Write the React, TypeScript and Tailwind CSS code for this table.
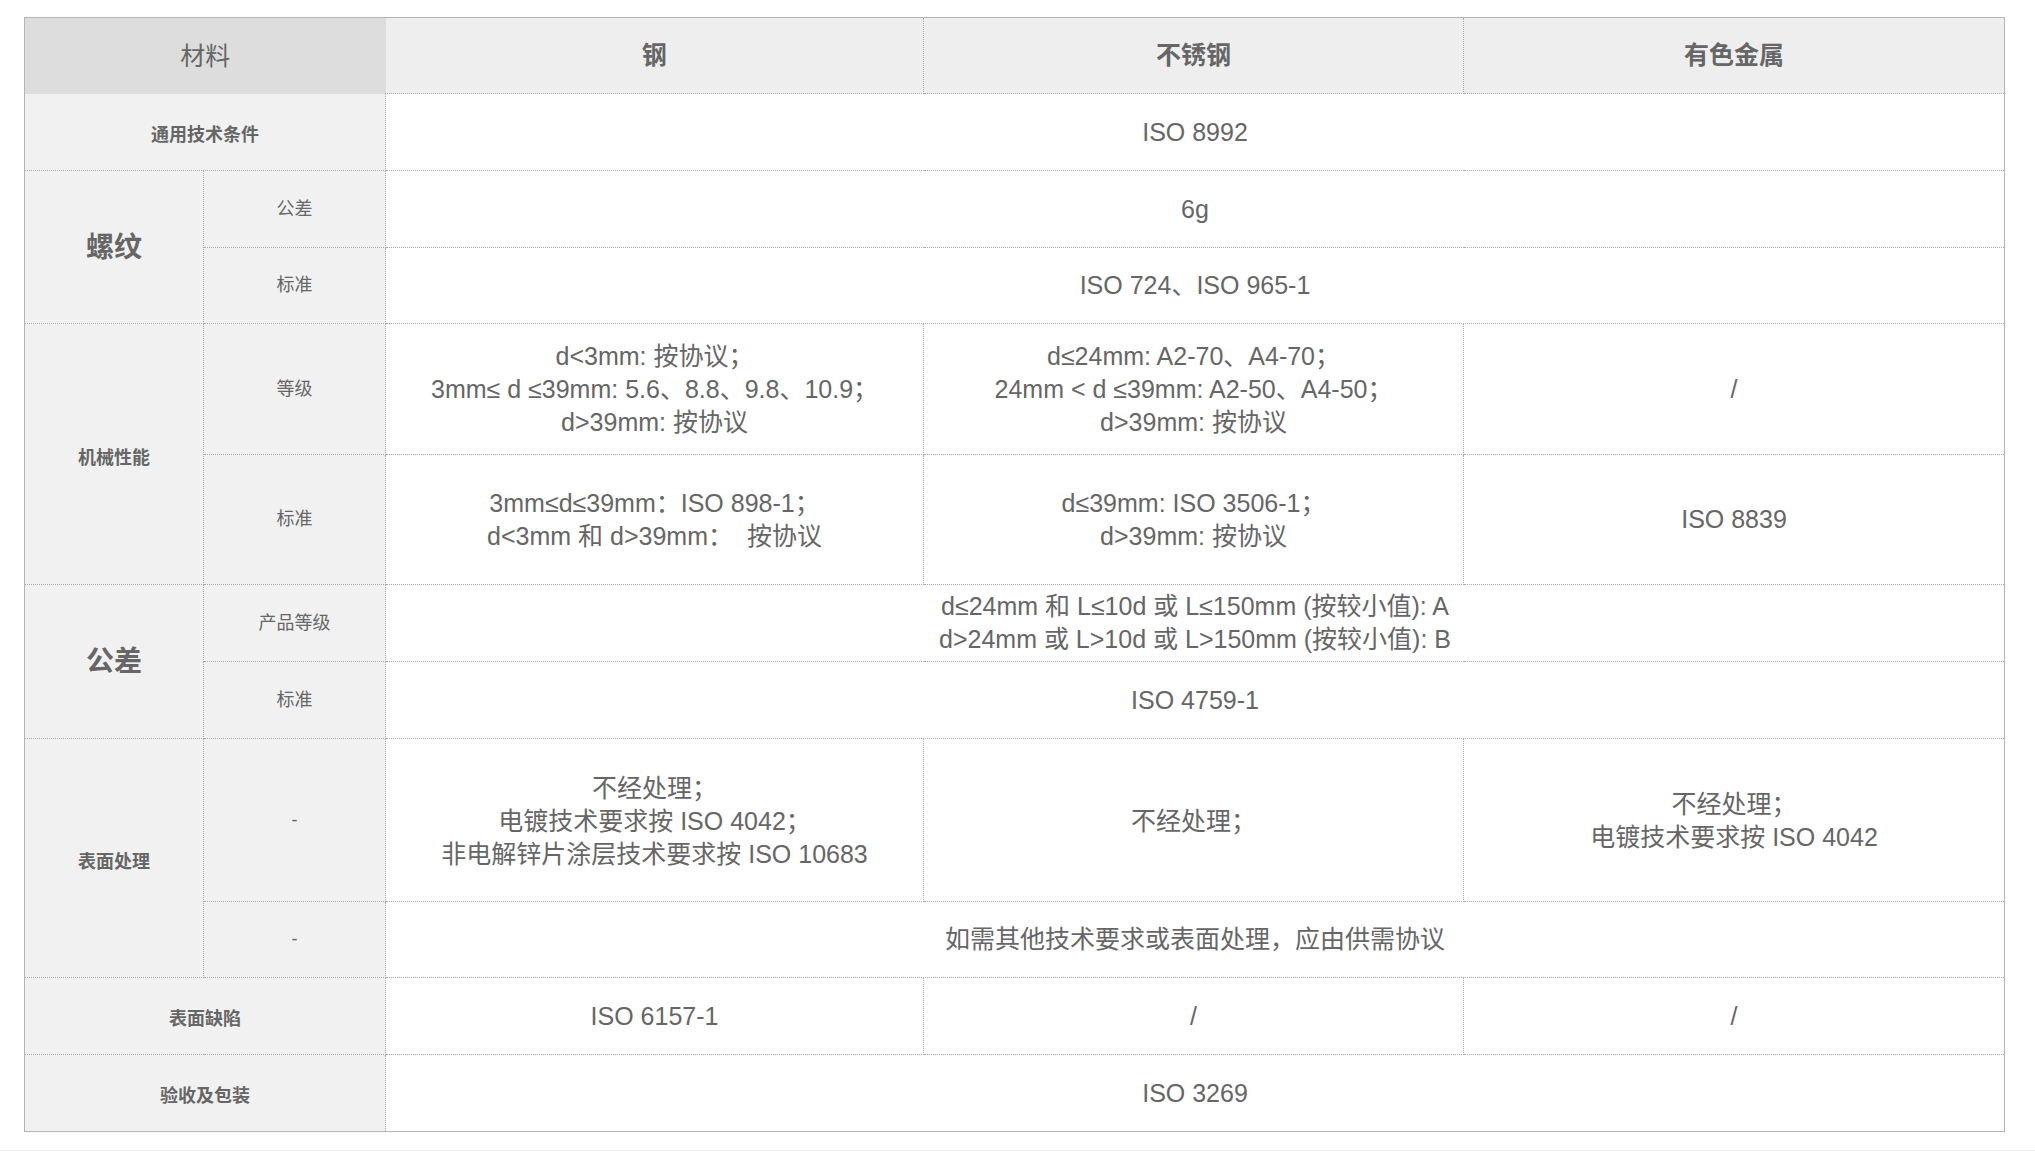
import React from 'react';

const font = 'font-["Liberation_Sans","Noto_Sans_CJK_SC",sans-serif]';

// shared cell styles
const cell = 'border-r border-b border-dotted border-[#aaa] p-0 text-center align-middle';
const label = `${cell} bg-[#f1f1f1]`;
const data = `${cell} bg-white text-[25px] leading-[33px]`;

const Lines: React.FC<{ lines: string[] }> = ({ lines }) => (
  <>
    {lines.map((l, i) => (
      <div key={i} className="whitespace-pre">{l}</div>
    ))}
  </>
);

const App: React.FC = () => {
  return (
    <div className={`min-h-screen bg-white text-[#666] ${font}`}>
      <div className="pt-[17px] px-[24px]">
        <table className="w-[1980px] table-fixed border-collapse border border-solid border-[#b4b4b4]">
          <colgroup>
            <col className="w-[179px]" />
            <col className="w-[182px]" />
            <col className="w-[538px]" />
            <col className="w-[540px]" />
            <col className="w-[541px]" />
          </colgroup>
          <tbody>
            {/* ── Header ── */}
            <tr className="h-[76px]">
              <td colSpan={2} className="p-0 pt-[2px] text-center align-middle bg-[#dddddd] text-[25px]">
                材料
              </td>
              <td className={`${cell} bg-[#eeeeee] text-[25px] font-bold`}>钢</td>
              <td className={`${cell} bg-[#eeeeee] text-[25px] font-bold`}>不锈钢</td>
              <td className={`${cell} bg-[#eeeeee] text-[25px] font-bold`}>有色金属</td>
            </tr>

            <tr className="h-[77px]">
              <td colSpan={2} className={`${label} text-[18px] font-bold pt-[7px]`}>通用技术条件</td>
              <td colSpan={3} className={data}>ISO 8992</td>
            </tr>

            {/* ── 螺纹 ── */}
            <tr className="h-[77px]">
              <td rowSpan={2} className={`${label} text-[28px] font-bold pt-[2px]`}>螺纹</td>
              <td className={`${label} text-[18px]`}>公差</td>
              <td colSpan={3} className={data}>6g</td>
            </tr>
            <tr className="h-[76px]">
              <td className={`${label} text-[18px]`}>标准</td>
              <td colSpan={3} className={data}>ISO 724、ISO 965-1</td>
            </tr>

            {/* ── 机械性能 ── */}
            <tr className="h-[131px]">
              <td rowSpan={2} className={`${label} text-[18px] font-bold pt-[8px]`}>机械性能</td>
              <td className={`${label} text-[18px]`}>等级</td>
              <td className={data}>
                <Lines lines={['d<3mm: 按协议；', '3mm≤ d ≤39mm: 5.6、8.8、9.8、10.9；', 'd>39mm: 按协议']} />
              </td>
              <td className={data}>
                <Lines lines={['d≤24mm: A2-70、A4-70；', '24mm < d ≤39mm: A2-50、A4-50；', 'd>39mm: 按协议']} />
              </td>
              <td className={data}>/</td>
            </tr>
            <tr className="h-[130px]">
              <td className={`${label} text-[18px]`}>标准</td>
              <td className={data}>
                <Lines lines={['3mm≤d≤39mm：ISO 898-1；', 'd<3mm 和 d>39mm：  按协议']} />
              </td>
              <td className={data}>
                <Lines lines={['d≤39mm: ISO 3506-1；', 'd>39mm: 按协议']} />
              </td>
              <td className={data}>ISO 8839</td>
            </tr>

            {/* ── 公差 ── */}
            <tr className="h-[77px]">
              <td rowSpan={2} className={`${label} text-[28px] font-bold`}>公差</td>
              <td className={`${label} text-[18px]`}>产品等级</td>
              <td colSpan={3} className={data}>
                <Lines
                  lines={[
                    'd≤24mm 和 L≤10d 或 L≤150mm (按较小值): A',
                    'd>24mm 或 L>10d 或 L>150mm (按较小值): B',
                  ]}
                />
              </td>
            </tr>
            <tr className="h-[77px]">
              <td className={`${label} text-[18px]`}>标准</td>
              <td colSpan={3} className={data}>ISO 4759-1</td>
            </tr>

            {/* ── 表面处理 ── */}
            <tr className="h-[163px]">
              <td rowSpan={2} className={`${label} text-[18px] font-bold pt-[8px]`}>表面处理</td>
              <td className={`${label} text-[18px]`}>-</td>
              <td className={`${data} pt-[2px]`}>
                <Lines lines={['不经处理；', '电镀技术要求按 ISO 4042；', '非电解锌片涂层技术要求按 ISO 10683']} />
              </td>
              <td className={`${data} pt-[2px]`}>不经处理；</td>
              <td className={`${data} pt-[2px]`}>
                <Lines lines={['不经处理；', '电镀技术要求按 ISO 4042']} />
              </td>
            </tr>
            <tr className="h-[76px]">
              <td className={`${label} text-[18px]`}>-</td>
              <td colSpan={3} className={data}>如需其他技术要求或表面处理，应由供需协议</td>
            </tr>

            <tr className="h-[77px]">
              <td colSpan={2} className={`${label} text-[18px] font-bold pt-[7px]`}>表面缺陷</td>
              <td className={data}>ISO 6157-1</td>
              <td className={data}>/</td>
              <td className={data}>/</td>
            </tr>
            <tr className="h-[77px]">
              <td colSpan={2} className={`${label} text-[18px] font-bold pt-[6px]`}>验收及包装</td>
              <td colSpan={3} className={data}>ISO 3269</td>
            </tr>
          </tbody>
        </table>
      </div>
      <div className="mt-[18px] border-t border-[#ececec]" />
    </div>
  );
};

export default App;
